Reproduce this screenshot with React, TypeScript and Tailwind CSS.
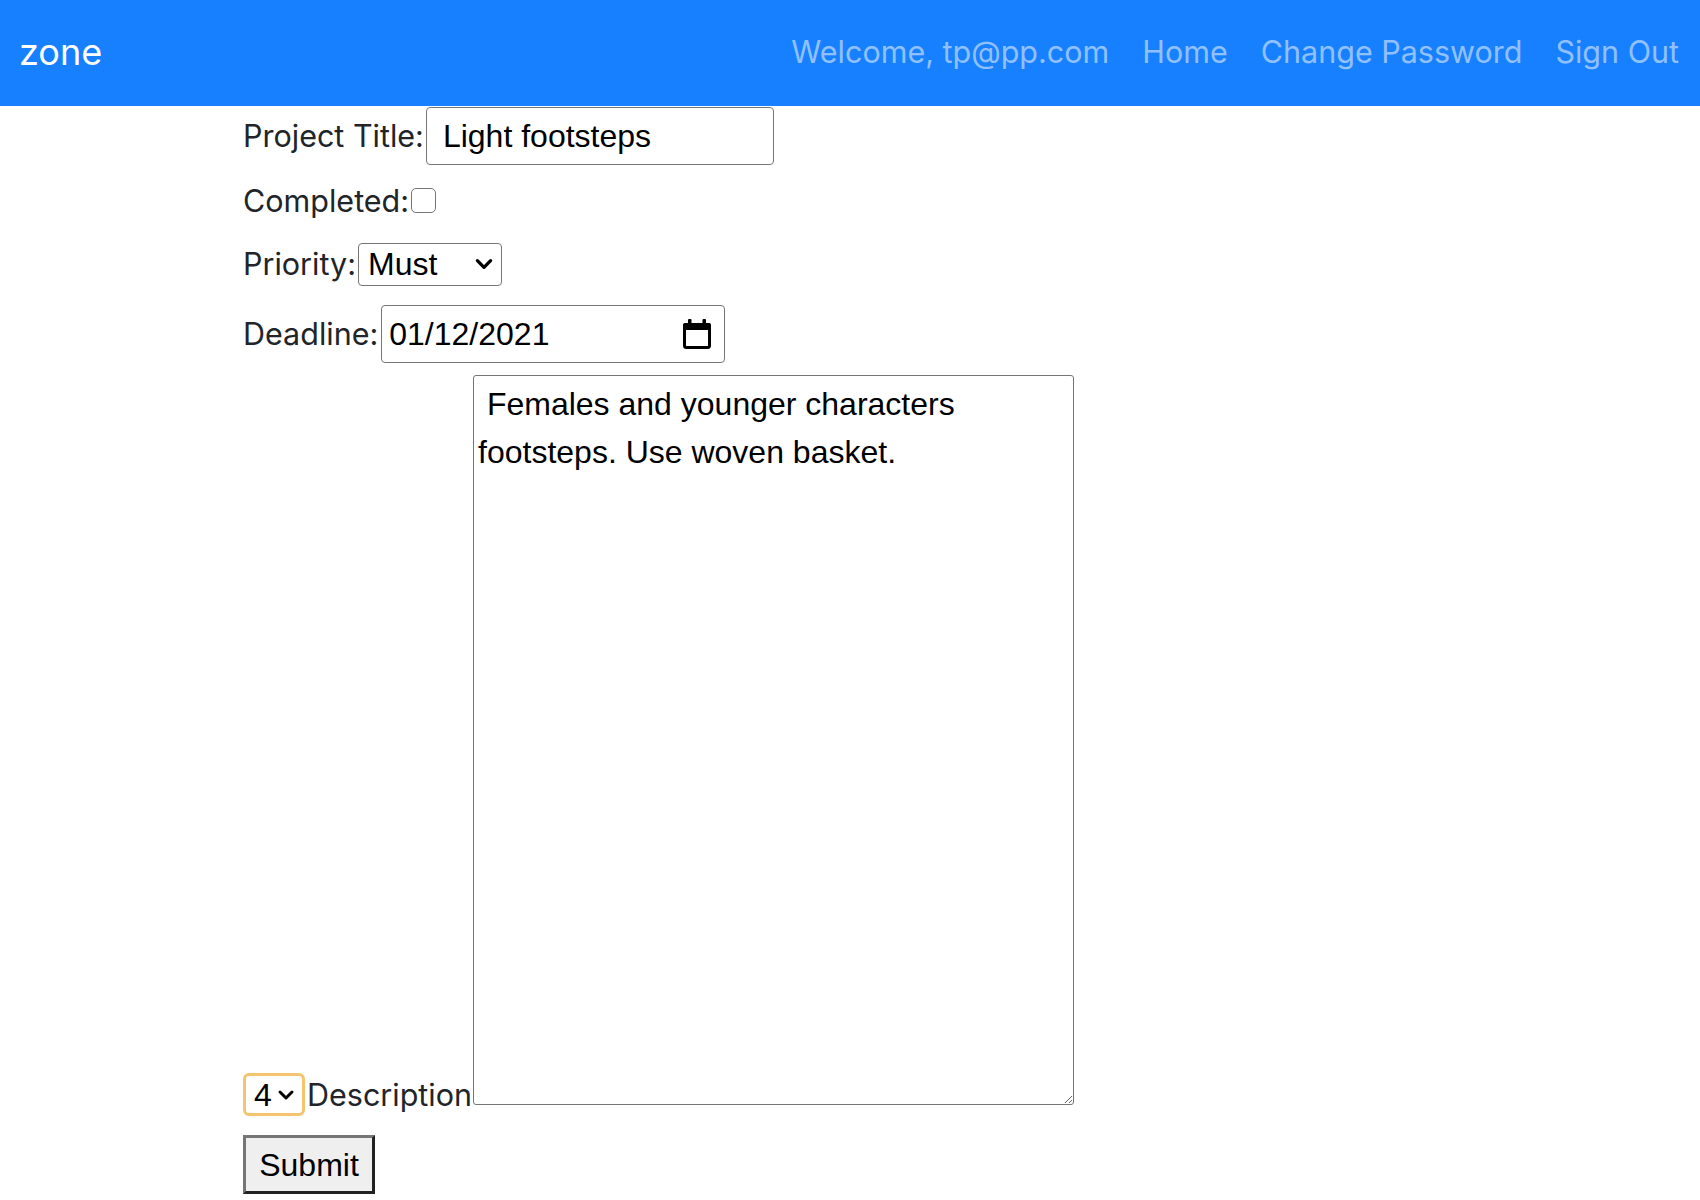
import { useState } from 'react';

const NavBar = () => {
  return (
    <nav className="flex h-[106px] items-center justify-between bg-[#1780fe] pb-[3px] pl-[19px] pr-[21px]">
      <a className="text-[36px] leading-none text-white">zone</a>
      <div className="flex items-center gap-[33px] text-[30.5px] text-[#91c0ff]">
        <span>Welcome, tp@pp.com</span>
        <a>Home</a>
        <a>Change Password</a>
        <a>Sign Out</a>
      </div>
    </nav>
  );
};

const Chevron = ({ klass }: { klass: string }) => (
  <svg className={klass} viewBox="0 0 20 20" fill="none" stroke="currentColor" aria-hidden="true">
    <polyline points="4,7 10,13 16,7" strokeWidth="3" strokeLinecap="round" strokeLinejoin="round" />
  </svg>
);

const App = () => {
  const [title, setTitle] = useState('Light footsteps');
  const [done, setDone] = useState(false);
  const [priority, setPriority] = useState('Must');
  const [deadline, setDeadline] = useState('01/12/2021');
  const [size, setSize] = useState('4');
  const [desc, setDesc] = useState(' Females and younger characters\nfootsteps. Use woven basket.');

  return (
    <div className="min-h-[1200px] bg-white font-['Inter','Liberation_Sans',sans-serif] text-[#212529]">
      <NavBar />
      <form className="pl-[243px] text-[30.5px]" onSubmit={e => e.preventDefault()}>
        <div className="flex h-[60px] items-center">
          <label>Project Title:</label>
          <input
            className="ml-[2px] h-[58px] w-[348px] rounded-[4px] border border-[#767676] pl-[16px] font-['Liberation_Sans',sans-serif] text-[32px] text-black outline-none"
            value={title}
            onChange={e => setTitle(e.target.value)}
          />
        </div>
        <div className="flex h-[69px] items-center">
          <label>Completed:</label>
          <input
            type="checkbox"
            className="ml-[2px] h-[25px] w-[25px] appearance-none rounded-[5px] border-[1.5px] border-[#767676] bg-white"
            checked={done}
            onChange={e => setDone(e.target.checked)}
          />
        </div>
        <div className="flex h-[58px] items-center">
          <label>Priority:</label>
          <div className="ml-[2px] flex h-[43px] w-[144px] items-center rounded-[4px] border border-[#767676] bg-white pr-[6px] font-['Liberation_Sans',sans-serif] text-[32px] text-black">
            <select
              className="h-full min-w-0 flex-1 appearance-none bg-transparent pl-[9px] leading-none outline-none"
              value={priority}
              onChange={e => setPriority(e.target.value)}
            >
              <option>Must</option>
              <option>Should</option>
              <option>Could</option>
              <option>Won't</option>
            </select>
            <Chevron klass="pointer-events-none h-[22px] w-[22px]" />
          </div>
        </div>
        <div className="flex h-[82px] items-center">
          <label>Deadline:</label>
          <div className="ml-[3px] flex h-[58px] w-[344px] items-center rounded-[4px] border border-[#767676] bg-white pr-[12px] font-['Liberation_Sans',sans-serif] text-[32px] text-black">
            <input
              className="h-full min-w-0 flex-1 bg-transparent pl-[7px] outline-none"
              value={deadline}
              onChange={e => setDeadline(e.target.value)}
            />
            <svg className="h-[32px] w-[30px]" viewBox="0 0 30 32" aria-hidden="true">
              <rect x="2.5" y="6.5" width="25" height="23" rx="2" fill="none" stroke="black" strokeWidth="3" />
              <rect x="1" y="5" width="28" height="7" rx="2" fill="black" />
              <rect x="6" y="1" width="3.5" height="6" rx="1" fill="black" />
              <rect x="20.5" y="1" width="3.5" height="6" rx="1" fill="black" />
            </svg>
          </div>
        </div>
        <div className="flex items-end">
          <div className="flex h-[43px] items-center">
            <div className="flex h-[43px] w-[62px] items-center rounded-[6px] border-[3px] border-[#f5c46f] bg-white pr-[6px] font-['Liberation_Sans',sans-serif] text-[32px] text-black">
              <select
                className="h-full min-w-0 flex-1 appearance-none bg-transparent pl-[8px] leading-none outline-none"
                value={size}
                onChange={e => setSize(e.target.value)}
              >
                <option>1</option>
                <option>2</option>
                <option>3</option>
                <option>4</option>
                <option>5</option>
              </select>
              <Chevron klass="pointer-events-none h-[20px] w-[20px]" />
            </div>
            <label className="ml-[2px]">Description</label>
          </div>
          <textarea
            className="mb-[11px] ml-[1px] h-[730px] w-[601px] rounded-[3px] border border-[#767676] px-[4px] pt-[4px] font-['Liberation_Sans',sans-serif] text-[32px] leading-[48px] text-black outline-none"
            value={desc}
            onChange={e => setDesc(e.target.value)}
          />
        </div>
        <button
          type="submit"
          className="mt-[19px] h-[59px] w-[132px] border-[3px] border-b-[#222] border-l-[#767676] border-r-[#222] border-t-[#767676] bg-[#efefef] font-['Liberation_Sans',sans-serif] text-[32px] text-black"
        >
          Submit
        </button>
      </form>
    </div>
  );
};

export default App;
